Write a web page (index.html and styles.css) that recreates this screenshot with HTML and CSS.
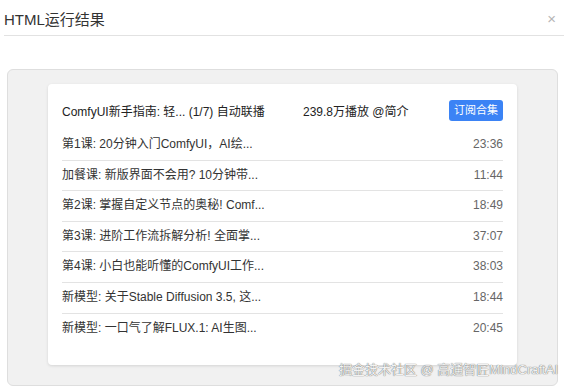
FILE: index.html
```html
<!DOCTYPE html>
<html lang="zh-CN">
<head>
    <meta charset="UTF-8">
    <meta name="viewport" content="width=device-width, initial-scale=1.0">
    <title>HTML运行结果</title>
    <link rel="stylesheet" href="styles.css">
</head>
<body>
    <div class="dialog">
        <div class="dialog-header">
            <span class="dialog-title">HTML运行结果</span>
            <span class="dialog-close">×</span>
        </div>

        <div class="result-frame">
            <div class="playlist">
                <div class="playlist-head">
                    <span class="playlist-name">ComfyUI新手指南: 轻... (1/7) 自动联播</span>
                    <span class="playlist-views">239.8万播放 @简介</span>
                    <a href="#" class="subscribe-btn">订阅合集</a>
                </div>
                <ul class="episodes">
                    <li class="episode"><span class="episode-title">第1课: 20分钟入门ComfyUI，AI绘...</span><span class="episode-time">23:36</span></li>
                    <li class="episode"><span class="episode-title">加餐课: 新版界面不会用? 10分钟带...</span><span class="episode-time">11:44</span></li>
                    <li class="episode"><span class="episode-title">第2课: 掌握自定义节点的奥秘! Comf...</span><span class="episode-time">18:49</span></li>
                    <li class="episode"><span class="episode-title">第3课: 进阶工作流拆解分析! 全面掌...</span><span class="episode-time">37:07</span></li>
                    <li class="episode"><span class="episode-title">第4课: 小白也能听懂的ComfyUI工作...</span><span class="episode-time">38:03</span></li>
                    <li class="episode"><span class="episode-title">新模型: 关于Stable Diffusion 3.5, 这...</span><span class="episode-time">18:44</span></li>
                    <li class="episode"><span class="episode-title">新模型: 一口气了解FLUX.1: AI生图...</span><span class="episode-time">20:45</span></li>
                </ul>
            </div>
        </div>
    </div>

    <div class="watermark">掘金技术社区 @ 高通智匠MindCraftAI</div>
</body>
</html>
```

FILE: styles.css
```css
:root {
    --text-color: #333333;
    --secondary-text: #666666;
    --line-color: #e3e3e3;
    --frame-bg: #f1f1f1;
    --accent-color: #3b83f5;
}

* {
    margin: 0;
    padding: 0;
    box-sizing: border-box;
}

body {
    font-family: "Liberation Sans", "Noto Sans CJK SC", sans-serif;
    background-color: #ffffff;
    color: var(--text-color);
    width: 568px;
    height: 388px;
    overflow: hidden;
    position: relative;
}

.dialog {
    padding: 0 4px;
}

.dialog-header {
    height: 36px;
    display: flex;
    justify-content: space-between;
    align-items: center;
    border-bottom: 1px solid #e2e2e2;
    padding-top: 1px;
}

.dialog-title {
    font-size: 15px;
    color: #333333;
}

.dialog-close {
    font-size: 15px;
    color: #b5b5b5;
    margin-right: 8px;
}

.result-frame {
    margin: 33px 6px 0 3px;
    height: 317px;
    background-color: var(--frame-bg);
    border: 1px solid #dedede;
    border-radius: 6px;
    padding: 14px 40px 0 40px;
}

.playlist {
    background-color: #ffffff;
    border-radius: 4px;
    box-shadow: 0 1px 3px rgba(0, 0, 0, 0.12);
    padding: 15px 14px 22px;
    font-size: 12px;
}

.playlist-head {
    display: flex;
    align-items: center;
    height: 22px;
    margin-bottom: 9px;
}

.playlist-name {
    width: 241px;
    color: #222222;
}

.playlist-views {
    color: #222222;
}

.subscribe-btn {
    margin-left: auto;
    background-color: var(--accent-color);
    color: #ffffff;
    text-decoration: none;
    border-radius: 3px;
    height: 21px;
    line-height: 21px;
    padding: 0 5px;
    font-size: 11px;
}

.episodes {
    list-style: none;
}

.episode {
    display: flex;
    justify-content: space-between;
    line-height: 29.6px;
    border-bottom: 1px solid var(--line-color);
}

.episode:last-child {
    border-bottom: none;
}

.episode-title {
    color: var(--text-color);
}

.episode-time {
    color: var(--secondary-text);
}

.watermark {
    position: absolute;
    right: 10px;
    bottom: 10px;
    font-size: 13px;
    color: #f2f2f2;
    text-shadow: 0 0 1px rgba(0, 0, 0, 0.55), 0 0 1px rgba(0, 0, 0, 0.35);
}
```
